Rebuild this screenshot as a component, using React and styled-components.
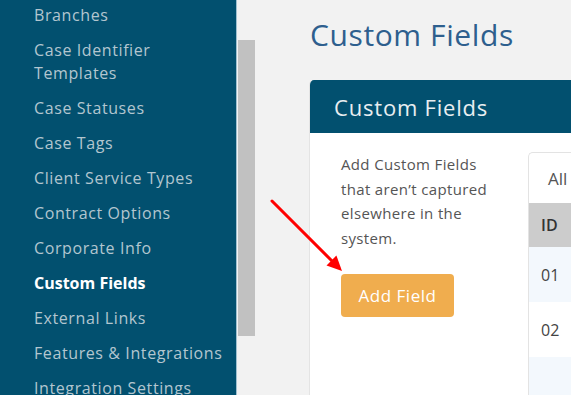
import React from "react";
import styled, { createGlobalStyle } from "styled-components";

const Global = createGlobalStyle`
  html, body { margin: 0; padding: 0; }
  body {
    background: #f2f2f2;
    font-family: "Open Sans", "Liberation Sans", sans-serif;
    overflow: hidden;
  }
`;

const Page = styled.div`
  position: relative;
  display: flex;
  width: 571px;
  height: 395px;
  overflow: hidden;
`;

const Sidebar = styled.nav`
  width: 236px;
  flex: none;
  background: #02506f;
  border-right: 1px solid #9fc0d0;
  overflow: hidden;
`;

const NavList = styled.ul`
  list-style: none;
  margin: -2px 0 0;
  padding: 0;
`;

const NavItem = styled.li`
  padding: 6px 12px 6px 34px;
  font-size: 16px;
  line-height: 23px;
  color: ${(p) => (p.$active ? "#ffffff" : "#b3c6cf")};
  font-weight: ${(p) => (p.$active ? 700 : 400)};
  letter-spacing: ${(p) => (p.$active ? "0px" : "0.6px")};
`;

const Rail = styled.div`
  width: 19px;
  flex: none;
  padding-top: 40px;
  box-sizing: border-box;
`;

const Thumb = styled.div`
  margin-left: 1px;
  width: 17px;
  height: 296px;
  background: #c1c1c1;
`;

const Main = styled.main`
  flex: 1;
  min-width: 0;
  padding: 17px 0 0 53px;
`;

const Title = styled.h1`
  margin: 0 0 0 1px;
  font-weight: 400;
  font-size: 30px;
  line-height: 36px;
  letter-spacing: 0.6px;
  color: #2e5f8e;
`;

const Card = styled.section`
  margin-top: 27px;
  width: 400px;
  height: 400px;
  background: #ffffff;
  border-left: 1px solid #e4e4e4;
  border-radius: 5px 0 0 0;
  overflow: hidden;
`;

const CardHeader = styled.header`
  height: 53px;
  background: #02506f;
  display: flex;
  align-items: center;
  padding-left: 24px;
  font-size: 22px;
  letter-spacing: 0.8px;
  color: #e9eef1;
`;

const CardBody = styled.div`
  display: grid;
  grid-template-columns: 218px 1fr;
`;

const Intro = styled.div`
  padding: 19px 0 0 31px;
`;

const IntroText = styled.p`
  margin: 0;
  width: 165px;
  font-size: 15px;
  line-height: 24.5px;
  letter-spacing: 0.35px;
  color: #555555;
`;

const Button = styled.button`
  margin-top: 24px;
  width: 113px;
  height: 43px;
  border: none;
  border-radius: 4px;
  background: #f0ad4e;
  color: #ffffff;
  font-family: inherit;
  font-size: 17px;
  letter-spacing: 0.5px;
  padding: 0;
`;

const TablePanel = styled.div`
  margin-top: 19px;
  border: 1px solid #e3e3e3;
  border-right: none;
  border-radius: 5px 0 0 0;
  overflow: hidden;
`;

const Tab = styled.div`
  height: 50px;
  display: flex;
  align-items: center;
  padding-left: 19px;
  font-size: 17px;
  color: #555555;
`;

const Row = styled.div`
  height: ${(p) => (p.$head ? "44px" : "55px")};
  display: flex;
  align-items: center;
  padding-left: 12px;
  font-size: 16px;
  color: ${(p) => (p.$head ? "#333333" : "#444444")};
  font-weight: ${(p) => (p.$head ? 600 : 400)};
  background: ${(p) => (p.$head ? "#cccccc" : p.$stripe ? "#f3f8fd" : "#ffffff")};
`;

const Arrow = styled.svg`
  position: absolute;
  left: 0;
  top: 0;
  pointer-events: none;
`;

const items = [
  "Branches",
  "Case Identifier Templates",
  "Case Statuses",
  "Case Tags",
  "Client Service Types",
  "Contract Options",
  "Corporate Info",
  "Custom Fields",
  "External Links",
  "Features & Integrations",
  "Integration Settings",
];

export default function App() {
  return (
    <>
      <Global />
      <Page>
        <Sidebar>
          <NavList>
            {items.map((t) => (
              <NavItem key={t} $active={t === "Custom Fields"}>
                {t === "Case Identifier Templates" ? (
                  <>
                    Case Identifier
                    <br />
                    Templates
                  </>
                ) : (
                  t
                )}
              </NavItem>
            ))}
          </NavList>
        </Sidebar>
        <Rail>
          <Thumb />
        </Rail>
        <Main>
          <Title>Custom Fields</Title>
          <Card>
            <CardHeader>Custom Fields</CardHeader>
            <CardBody>
              <Intro>
                <IntroText>
                  Add Custom Fields that aren’t captured elsewhere in the system.
                </IntroText>
                <Button>Add Field</Button>
              </Intro>
              <TablePanel>
                <Tab>All</Tab>
                <Row $head>ID</Row>
                <Row $stripe>01</Row>
                <Row>02</Row>
                <Row $stripe />
              </TablePanel>
            </CardBody>
          </Card>
        </Main>
        <Arrow width="571" height="395" viewBox="0 0 571 395">
          <line x1="272" y1="201" x2="333" y2="262" stroke="#ff0000" strokeWidth="3" strokeLinecap="round" />
          <polygon points="342,271 326.5,265.4 336.4,255.5" fill="#ff0000" />
        </Arrow>
      </Page>
    </>
  );
}
